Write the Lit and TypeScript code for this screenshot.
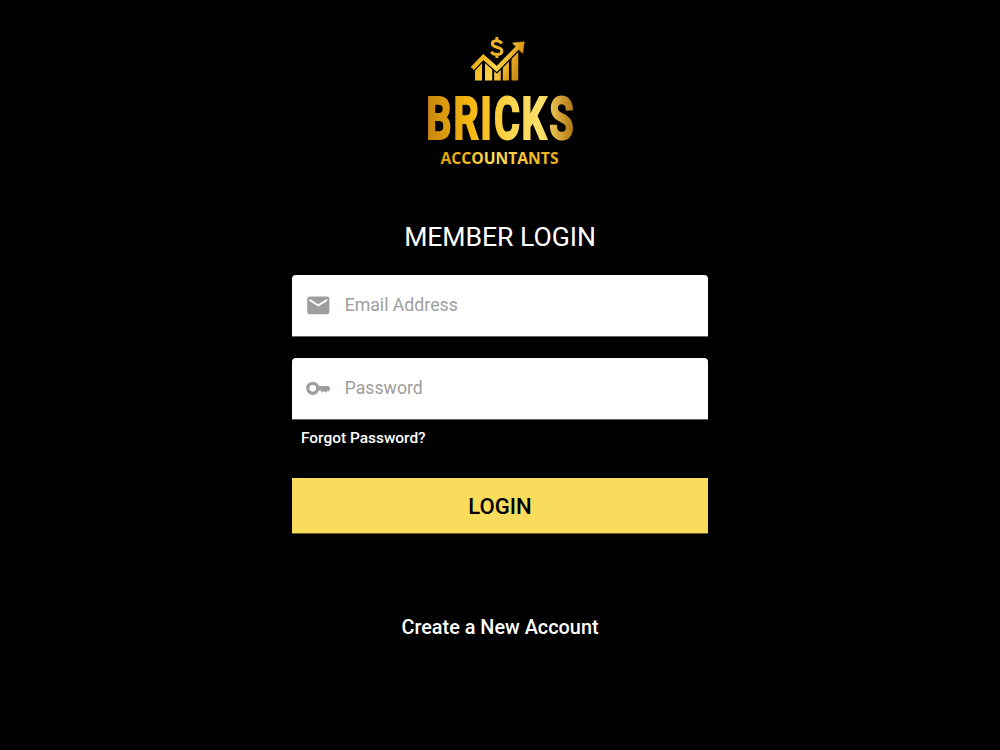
import { LitElement, html, css } from "lit";
import { customElement } from "lit/decorators.js";

@customElement("app-root")
export class AppRoot extends LitElement {
  static styles = css`
    :host { display: block; font-family: Roboto, sans-serif; }
    .page { box-sizing: border-box; height: 750px; background: #000; display: flex; flex-direction: column; align-items: center; padding-top: 30px; color: #fff; overflow: hidden; }
    .logo { display: block; width: 160px; height: 145px; flex: none; }
    .mark { font: 700 60px Roboto, sans-serif; }
    .sub { font: 700 16.6px "Open Sans", sans-serif; }
    .title { margin: 44px 0 0; font-size: 26.6px; line-height: 36px; font-weight: 400; letter-spacing: -0.05px; white-space: nowrap; }
    .form { width: 416px; margin-top: 20px; display: flex; flex-direction: column; }
    .field { box-sizing: border-box; height: 61px; background: #fff; border-radius: 4px 4px 0 0; box-shadow: 0 1px #666; display: flex; align-items: center; padding-left: 13px; gap: 13px; color: #9e9e9e; font-size: 17.7px; }
    .field span { padding-bottom: 0.5px; }
    .field + .field { margin-top: 22px; }
    .icon { width: 26.67px; height: 26.67px; fill: #9e9e9e; flex: none; }
    .forgot { margin: 9px 0 0 9px; font-size: 15.45px; line-height: 20px; font-weight: 500; }
    .login { margin-top: 30px; height: 55px; border: 0; padding: 1px 0 0; background: #f9dc5c; box-shadow: 0 1px #6b5e27; color: #000; font: 500 22.1px Roboto, sans-serif; }
    .create { margin-top: 82px; font-size: 19.85px; line-height: 26px; font-weight: 500; white-space: nowrap; }
  `;

  private logo() {
    return html`<svg class="logo" viewBox="420 30 160 145">
      <defs>
        <linearGradient id="gold" gradientUnits="userSpaceOnUse" x1="427" y1="96" x2="571" y2="110">
          <stop offset="0" stop-color="#c8860d"/><stop offset=".3" stop-color="#f7b90f"/>
          <stop offset=".5" stop-color="#fde064"/><stop offset=".7" stop-color="#f7c62b"/><stop offset="1" stop-color="#e6a412"/>
        </linearGradient>
        <linearGradient id="word" gradientUnits="userSpaceOnUse" x1="0" y1="-20" x2="218" y2="-20">
          <stop offset="0" stop-color="#c8860d"/><stop offset=".3" stop-color="#f7b90f"/>
          <stop offset=".6" stop-color="#fad651"/><stop offset=".8" stop-color="#fbe06a"/><stop offset="1" stop-color="#b87c18"/>
        </linearGradient>
        <linearGradient id="chart" gradientUnits="userSpaceOnUse" x1="470" y1="50" x2="525" y2="74">
          <stop offset="0" stop-color="#d99a13"/><stop offset=".25" stop-color="#f5b91c"/><stop offset=".5" stop-color="#fbd650"/><stop offset=".75" stop-color="#e0a01c"/><stop offset="1" stop-color="#b87811"/>
        </linearGradient>
      </defs>
      <path fill="url(#chart)" d="M475 67L482 59V80.500H475ZM485 59L492.200 65V80.500H485ZM494.200 68L500.800 67V80.500H494.200ZM502.800 63L509 57V80.500H502.800ZM511.500 54.500L518.300 49V80.500H511.500Z"/>
      <path d="M471 70L483.300 57L496.800 69L521 44.500" fill="none" stroke="#000" stroke-width="6.800"/>
      <path d="M472.300 68.500L483.300 57L496.800 69L518.500 46.800" fill="none" stroke="url(#chart)" stroke-width="4.500"/>
      <path fill="url(#chart)" stroke="url(#chart)" stroke-width=".6" d="M512.500 43L524.300 41.800L522.700 53.500Z"/>
      <path d="M501.700 43.500C500 39.800 492.300 39.700 492.300 43.800C492.300 48.300 501.900 46.200 501.900 51C501.900 55.600 493.400 55.500 491.300 51.700M496.900 37V41M496.900 54V58" fill="none" stroke="#edb42b" stroke-width="3"/>
      <text class="mark" transform="translate(427.500 139) scale(.66 1)" x="-2 39.500 79.800 100.600 142.400 184.600" y="0" fill="url(#word)" stroke="url(#word)" stroke-width="2">BRICKS</text>
      <text class="sub" x="440.500" y="164.400" textLength="118" lengthAdjust="spacingAndGlyphs" fill="url(#gold)">ACCOUNTANTS</text>
    </svg>`;
  }

  render() {
    return html`<main class="page">
      ${this.logo()}
      <h1 class="title">MEMBER LOGIN</h1>
      <div class="form">
        <div class="field"><svg class="icon" viewBox="0 0 24 24"><path d="M20 4H4c-1.100 0-1.990.9-1.990 2L2 18c0 1.100.9 2 2 2h16c1.100 0 2-.9 2-2V6c0-1.100-.9-2-2-2zm0 4l-8 5-8-5V6l8 5 8-5v2z"/></svg><span>Email Address</span></div>
        <div class="field"><svg class="icon" viewBox="0 0 24 24"><path fill-rule="evenodd" d="M12.600 10C11.700 7.500 9.500 6 7 6a6 6 0 0 0 0 12c2.500 0 4.700-1.500 5.600-4H14L15.400 16L17 14.400L18.500 16L20 14.400L20.900 15L23 12L21 10ZM7 9a3 3 0 1 1 0 6a3 3 0 0 1 0-6Z"/></svg><span>Password</span></div>
        <a class="forgot">Forgot Password?</a>
        <button class="login">LOGIN</button>
      </div>
      <a class="create">Create a New Account</a>
    </main>`;
  }
}
